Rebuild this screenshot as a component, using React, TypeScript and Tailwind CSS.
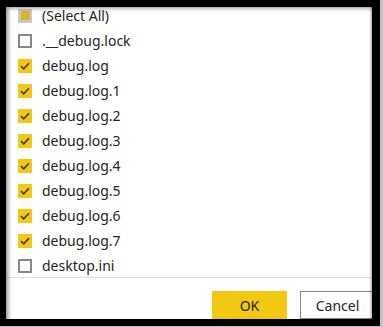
import React from "react";

type State = "all" | "on" | "off";

const items: { label: string; state: State }[] = [
  { label: "(Select All)", state: "all" },
  { label: ".__debug.lock", state: "off" },
  { label: "debug.log", state: "on" },
  { label: "debug.log.1", state: "on" },
  { label: "debug.log.2", state: "on" },
  { label: "debug.log.3", state: "on" },
  { label: "debug.log.4", state: "on" },
  { label: "debug.log.5", state: "on" },
  { label: "debug.log.6", state: "on" },
  { label: "debug.log.7", state: "on" },
  { label: "desktop.ini", state: "off" },
];

function Box({ state }: { state: State }) {
  if (state === "all") {
    return (
      <div className="w-[14px] h-[14px] bg-[#c8c8c8] flex items-center justify-center">
        <div className="w-[9px] h-[9px] bg-[#d9b42c]" />
      </div>
    );
  }
  if (state === "on") {
    return (
      <div className="w-[14px] h-[14px] bg-[#f2c811] flex items-center justify-center">
        <svg width="14" height="14" viewBox="0 0 14 14">
          <path d="M3 7.2 L5.7 9.8 L11 4.2" fill="none" stroke="#3b3a39" strokeWidth="1.6" />
        </svg>
      </div>
    );
  }
  return <div className="w-[14px] h-[14px] border-2 border-[#8a8886] bg-white" />;
}

export default function App() {
  return (
    <div
      className="w-[383px] h-[327px] bg-[#c4c4c4] overflow-hidden"
      style={{ fontFamily: '"Noto Sans", "Open Sans", sans-serif' }}
    >
      <div className="w-[380px] h-[326px] bg-black pt-[7px] pl-[6px] pr-[8px] pb-[7px]">
        <div className="relative w-[366px] h-[312px] bg-white overflow-hidden flex flex-col">
          <div className="h-[271px] overflow-hidden">
            <div className="-mt-[4px] flex flex-col">
              {items.map((it) => (
                <div key={it.label} className="h-[25px] flex items-center pl-[12px]">
                  <Box state={it.state} />
                  <span className="ml-[10px] text-[14px] leading-none text-[#252423]">
                    {it.label}
                  </span>
                </div>
              ))}
            </div>
          </div>
          <div className="h-px bg-[#e1dfdd]" />
          <div className="flex pt-[13px] pl-[206px] gap-[13px]">
            <div className="shrink-0 w-[75px] h-[28px] bg-[#f2c811] flex items-center justify-center text-[14px] text-[#252423]">
              OK
            </div>
            <div className="shrink-0 w-[75px] h-[28px] bg-white border border-[#8a8886] flex items-center justify-center text-[14px] text-[#252423]">
              Cancel
            </div>
          </div>
          <div className="pointer-events-none absolute inset-0 shadow-[inset_4px_3px_4px_-2px_rgba(0,0,0,0.45),inset_-3px_0_3px_-2px_rgba(0,0,0,0.4)]" />
        </div>
      </div>
    </div>
  );
}
